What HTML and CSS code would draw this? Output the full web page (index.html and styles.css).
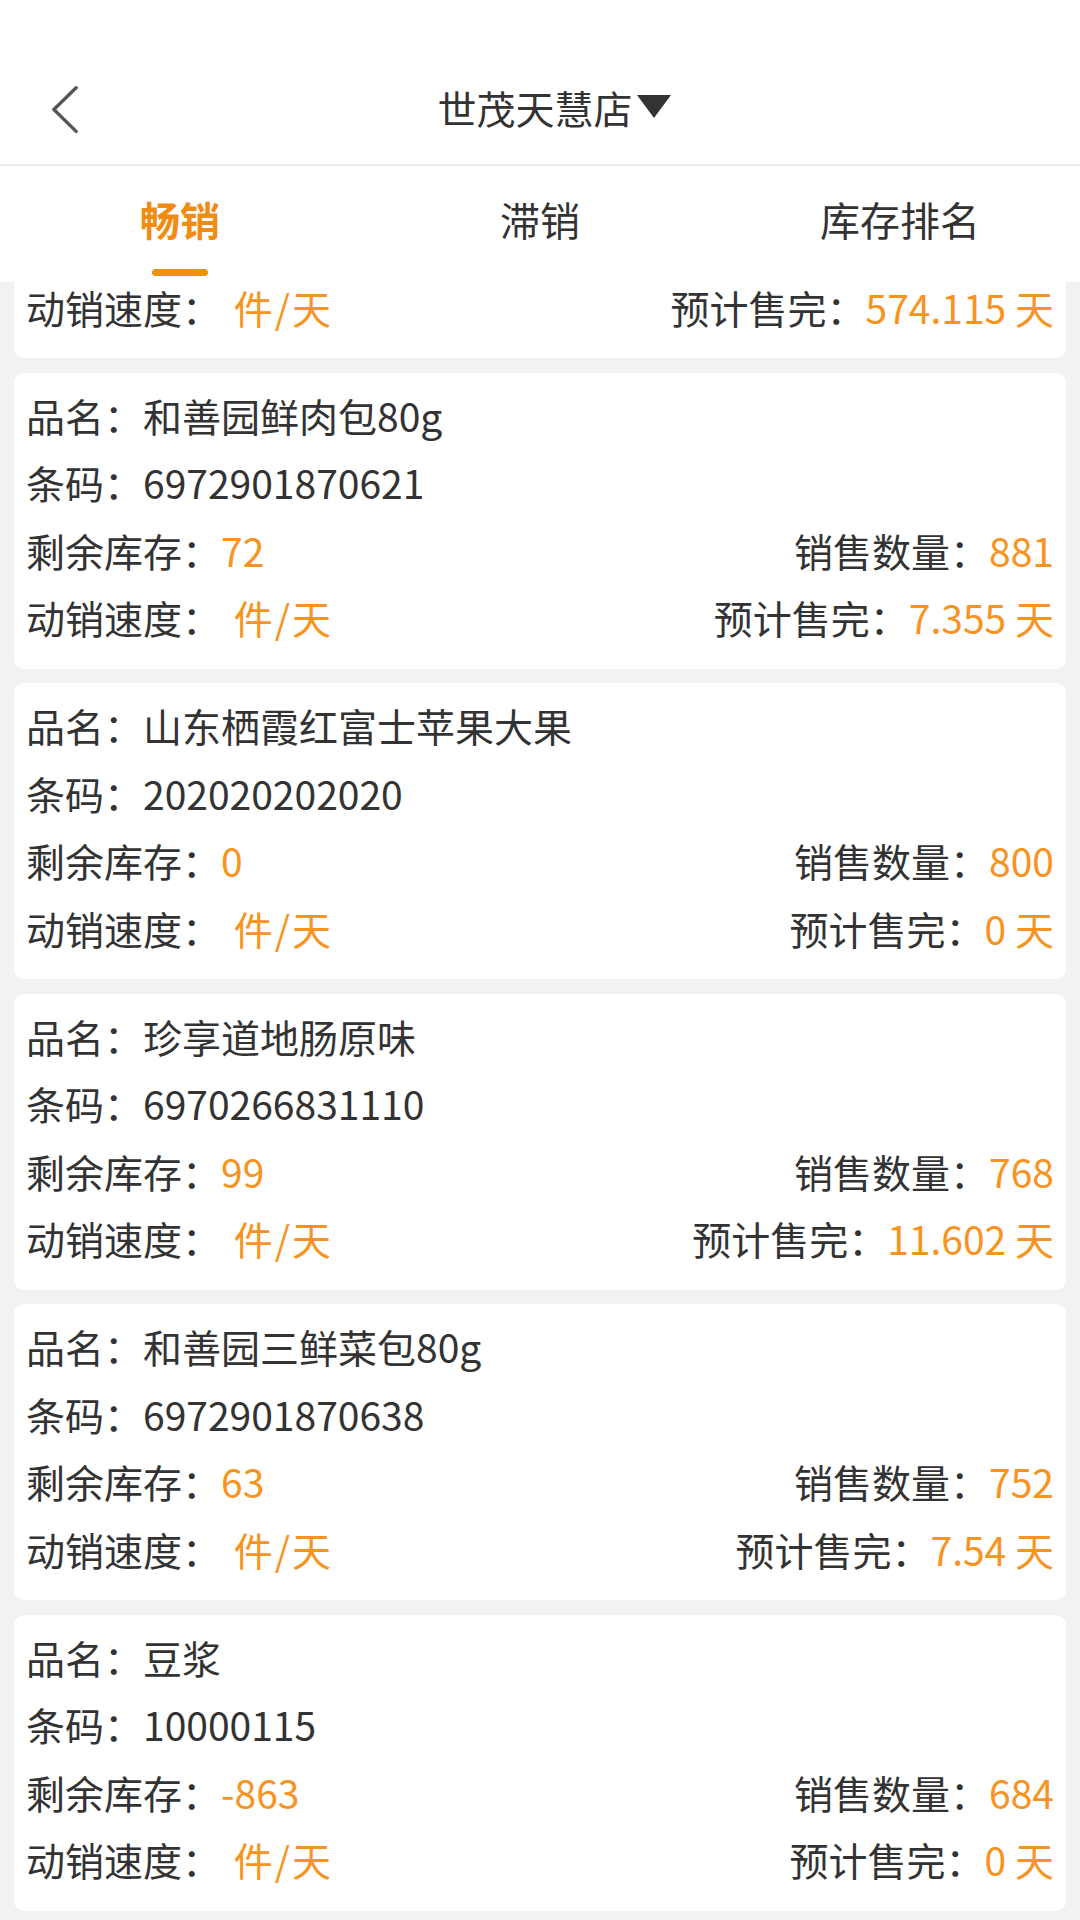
FILE: index.html
```html
<!DOCTYPE html>
<html lang="zh-CN">
<head>
    <meta charset="UTF-8">
    <title>畅销排行</title>
    <link rel="stylesheet" href="styles.css">
</head>
<body>
<div class="page">
    <div class="topbar">
        <a class="back" href="#">
            <svg width="28" height="52" viewBox="0 0 28 52">
                <polyline points="26,2 2,25.5 26,49" fill="none" stroke="#555" stroke-width="3.6" stroke-linecap="round" stroke-linejoin="round"/>
            </svg>
        </a>
        <div class="title">世茂天慧店<span class="caret"></span></div>
    </div>

    <div class="tabs">
        <div class="tab active"><span>畅销</span><i class="bar"></i></div>
        <div class="tab"><span>滞销</span><i class="bar"></i></div>
        <div class="tab"><span>库存排名</span><i class="bar"></i></div>
    </div>

    <div class="list">
        <!-- 上一条只露出最后一行 -->
        <div class="card cut">
            <div class="row">
                <span>动销速度： <em class="val unit">件/天</em></span>
                <span>预计售完：<em class="val">574.115 天</em></span>
            </div>
        </div>

        <div class="card">
            <div class="row"><span>品名：和善园鲜肉包80g</span></div>
            <div class="row"><span>条码：6972901870621</span></div>
            <div class="row">
                <span>剩余库存：<em class="val">72</em></span>
                <span>销售数量：<em class="val">881</em></span>
            </div>
            <div class="row">
                <span>动销速度： <em class="val unit">件/天</em></span>
                <span>预计售完：<em class="val">7.355 天</em></span>
            </div>
        </div>

        <div class="card">
            <div class="row"><span>品名：山东栖霞红富士苹果大果</span></div>
            <div class="row"><span>条码：202020202020</span></div>
            <div class="row">
                <span>剩余库存：<em class="val">0</em></span>
                <span>销售数量：<em class="val">800</em></span>
            </div>
            <div class="row">
                <span>动销速度： <em class="val unit">件/天</em></span>
                <span>预计售完：<em class="val">0 天</em></span>
            </div>
        </div>

        <div class="card">
            <div class="row"><span>品名：珍享道地肠原味</span></div>
            <div class="row"><span>条码：6970266831110</span></div>
            <div class="row">
                <span>剩余库存：<em class="val">99</em></span>
                <span>销售数量：<em class="val">768</em></span>
            </div>
            <div class="row">
                <span>动销速度： <em class="val unit">件/天</em></span>
                <span>预计售完：<em class="val">11.602 天</em></span>
            </div>
        </div>

        <div class="card">
            <div class="row"><span>品名：和善园三鲜菜包80g</span></div>
            <div class="row"><span>条码：6972901870638</span></div>
            <div class="row">
                <span>剩余库存：<em class="val">63</em></span>
                <span>销售数量：<em class="val">752</em></span>
            </div>
            <div class="row">
                <span>动销速度： <em class="val unit">件/天</em></span>
                <span>预计售完：<em class="val">7.54 天</em></span>
            </div>
        </div>

        <div class="card">
            <div class="row"><span>品名：豆浆</span></div>
            <div class="row"><span>条码：10000115</span></div>
            <div class="row">
                <span>剩余库存：<em class="val">-863</em></span>
                <span>销售数量：<em class="val">684</em></span>
            </div>
            <div class="row">
                <span>动销速度： <em class="val unit">件/天</em></span>
                <span>预计售完：<em class="val">0 天</em></span>
            </div>
        </div>
    </div>
</div>
</body>
</html>
```

FILE: styles.css
```css
* {
    box-sizing: border-box;
}

body {
    margin: 0;
    font-family: "Noto Sans CJK SC", "Noto Sans", sans-serif;
    background-color: #f2f2f2;
    color: #333;
}

.page {
    width: 1080px;
    height: 1920px;
    display: flex;
    flex-direction: column;
    overflow: hidden;
}

/* 顶部导航 */
.topbar {
    flex-shrink: 0;
    height: 166px;
    padding: 55px 50px 0 0;
    background-color: #fff;
    border-bottom: 2px solid #ececec;
    display: flex;
    align-items: center;
}

.back {
    width: 78px;
    padding-left: 52px;
    display: flex;
    align-items: center;
}

.title {
    flex: 1;
    display: flex;
    justify-content: center;
    align-items: center;
    font-size: 39px;
    line-height: 50px;
    margin-top: -6px;
    color: #333;
}

.caret {
    width: 0;
    height: 0;
    margin: 0 0 0 4px;
    border-left: 17px solid transparent;
    border-right: 17px solid transparent;
    border-top: 23px solid #333;
}

/* 标签栏 */
.tabs {
    flex-shrink: 0;
    height: 116px;
    background-color: #fff;
    display: grid;
    grid-template-columns: 1fr 1fr 1fr;
}

.tab {
    display: flex;
    flex-direction: column;
    align-items: center;
    padding-top: 25px;
    font-size: 40px;
    line-height: 56px;
    color: #333;
}

.tab .bar {
    width: 56px;
    height: 7px;
    margin-top: 22px;
    border-radius: 4px;
}

.tab.active {
    color: #f08c12;
    font-weight: 700;
}

.tab.active .bar {
    background-color: #f0900f;
}

/* 列表 */
.list {
    flex: 1;
    padding: 0 14px;
}

.card {
    background-color: #fff;
    border-radius: 10px;
    padding: 9px 12px 17px;
    margin-bottom: 14.5px;
}

/* 滚动后被标签栏遮住上半部分的卡片 */
.card.cut {
    padding-top: 0;
    padding-bottom: 26px;
    border-radius: 0 0 10px 10px;
}

.card.cut .row {
    line-height: 50px;
}

.row {
    display: flex;
    justify-content: space-between;
    font-size: 39px;
    line-height: 67.5px;
    white-space: nowrap;
}

.val {
    font-style: normal;
    color: #f7931e;
}

.unit {
    margin-left: 4px;
    letter-spacing: 2px;
}
```
